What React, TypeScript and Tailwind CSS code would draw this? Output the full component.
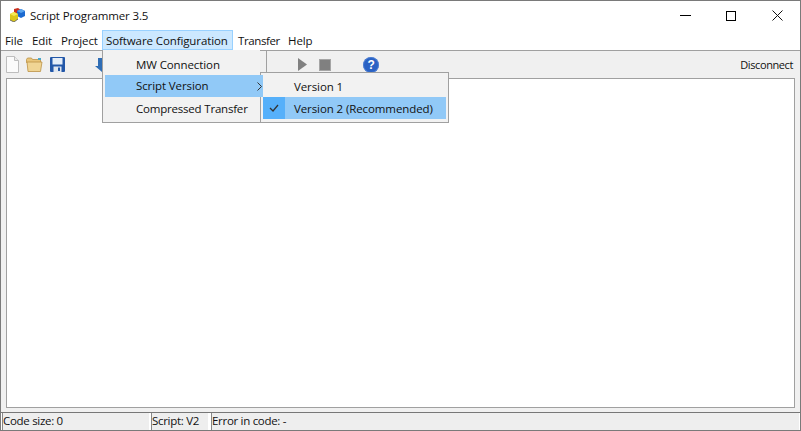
import React from "react";

export default function App() {
  return (
    <div className="relative w-[801px] h-[431px] overflow-hidden bg-[#f0f0f0] border border-[#7a7a7a] flex flex-col text-[11.5px] tracking-[-0.1px] leading-[16px] text-[#111] font-['Open_Sans','Noto_Sans',sans-serif]">
      {/* title */}
      <div className="h-[29px] bg-white flex items-center shrink-0">
        <svg width="16" height="14" viewBox="0 0 16 14" className="ml-[8px] mb-[1px]">
          <path d="M5 1l4-1 3 2v3l-3 2-4-1z" fill="#c9301e" />
          <path d="M8 3l4-2 4 2v5l-4 2-4-2z" fill="#1c6ad0" />
          <path d="M12 1l4 2-4 2-4-2z" fill="#5aa5ee" />
          <path d="M1 6l4-2 4 2v5l-4 3-4-2z" fill="#dcc81a" />
          <path d="M5 4l4 2-4 2-4-2z" fill="#f6ea55" />
          <path d="M1 12l4 2 4-3" fill="none" stroke="#555" strokeWidth="0.8" />
        </svg>
        <span className="ml-[5px] tracking-[-0.13px]">Script Programmer 3.5</span>
        <div className="ml-auto flex items-center">
          <div className="w-[46px] h-[29px] flex items-center justify-center">
            <div className="w-[11px] h-px bg-black" />
          </div>
          <div className="w-[46px] h-[29px] flex items-center justify-center">
            <div className="w-[10px] h-[10px] border border-black" />
          </div>
          <div className="w-[46px] h-[29px] flex items-center justify-center">
            <svg width="11" height="11" viewBox="0 0 11 11"><path d="M.5.5l10 10M10.5.5l-10 10" stroke="#111" strokeWidth="1" /></svg>
          </div>
        </div>
      </div>
      {/* menu */}
      <div className="h-[20px] bg-white flex items-center shrink-0 pl-[4px] leading-[21px]">
        <span className="w-[27px]">File</span>
        <span className="w-[29px]">Edit</span>
        <span className="w-[41px]">Project</span>
        <span className="w-[131px] pl-[3px] h-[20px] leading-[19px] bg-[#cce8ff] border border-[#99d1ff] whitespace-nowrap">Software Configuration</span>
        <span className="ml-[5px] w-[50px] tracking-[-0.4px]">Transfer</span>
        <span>Help</span>
      </div>
      {/* toolbar */}
      <div className="h-[28px] shrink-0 border-t border-[#a0a0a0] bg-[#f0f0f0] flex items-center">
        <svg width="15" height="17" viewBox="0 0 15 17" className="ml-[4px]">
          <path d="M1.5.5h8l4 4v12h-12z" fill="#fbfbfb" stroke="#bdbdbd" />
          <path d="M9.5.5v4h4" fill="#ececec" stroke="#bdbdbd" />
        </svg>
        <svg width="17" height="15" viewBox="0 0 17 15" className="ml-[6px]">
          <path d="M.5 2.5l1-1.5h4l1 1.5h8v3h-14z" fill="#e9c67a" stroke="#bb9245" strokeWidth="0.8" />
          <path d="M12 1h3v2h-3z" fill="#4aa7c8" />
          <path d="M1 5h15l-1.5 9.500h-12.500z" fill="#f0d594" stroke="#bb9245" strokeWidth="0.8" />
        </svg>
        <svg width="15" height="15" viewBox="0 0 15 15" className="ml-[7px]">
          <rect x="0" y="0" width="15" height="15" rx="1" fill="#2257a8" />
          <rect x="2.500" y="1" width="10" height="6.500" fill="#e4edf8" />
          <rect x="3.500" y="9.500" width="8" height="5.500" fill="#dfe6ef" />
          <rect x="8" y="10.500" width="2" height="3.500" fill="#2257a8" />
        </svg>
        <svg width="14" height="14" viewBox="0 0 14 14" className="ml-[30px]">
          <path d="M3 0h8v8h3l-7 6-7-6h3z" fill="#2f6db5" />
        </svg>
        <div className="ml-[157px] w-px h-[27px] bg-[#a0a0a0]" />
        <svg width="9" height="13" viewBox="0 0 9 13" className="ml-[31px]">
          <path d="M0 0l9 6.500-9 6.500z" fill="#808080" />
        </svg>
        <div className="ml-[12px] w-[12px] h-[12px] bg-[#808080] border border-[#a5a5a5]" />
        <svg width="16" height="16" viewBox="0 0 16 16" className="ml-[32px]">
          <circle cx="8" cy="8" r="8" fill="#2a62c4" />
          <circle cx="8" cy="8" r="7.500" fill="none" stroke="#5f8fdc" strokeWidth="0.6" />
          <text x="8" y="12.200" fontSize="12" fontWeight="700" fill="#fff" textAnchor="middle" fontFamily="Liberation Sans">?</text>
        </svg>
        <span className="ml-auto mr-[7px] text-[11px] tracking-[-0.4px]">Disconnect</span>
      </div>
      {/* editor */}
      <div className="h-[330px] shrink-0 mx-[5px] bg-white border border-[#a0a0a0]" />
      {/* status */}
      <div className="h-[18px] shrink-0 mt-[4px] border-t border-[#777] flex pl-px pr-px bg-white">
        <div className="w-[147px] border-l border-[#888] leading-[16px] bg-[#eeeeee] tracking-[-0.3px]">Code size: 0</div>
        <div className="ml-[2px] w-[57px] border-l border-[#888] leading-[16px] bg-[#eeeeee] tracking-[-0.3px]">Script: V2</div>
        <div className="ml-[3px] flex-1 border-l border-[#888] leading-[16px] bg-[#eeeeee] tracking-[-0.3px]">Error in code: -</div>
      </div>

      {/* submenu */}
      <div className="absolute left-[259px] top-[71px] w-[189px] h-[51px] bg-[#f2f2f2] border border-[#a0a0a0] pt-[2px] px-[2px]">
        <div className="h-[22px] leading-[24px] pl-[31px]">Version 1</div>
        <div className="h-[22px] leading-[24px] pl-[31px] bg-[#91c9f7] relative">
          <div className="absolute left-0 top-0 w-[22px] h-[22px] bg-[#56b0fa] flex items-center justify-center">
            <svg width="10" height="8" viewBox="0 0 10 8"><path d="M1 4l3 3 5-6" fill="none" stroke="#333" strokeWidth="1.3" /></svg>
          </div>
          Version 2 (Recommended)
        </div>
      </div>
      {/* menu dropdown */}
      <div className="absolute left-[101px] top-[49px] w-[158px] h-[73px] bg-[#f2f2f2] border-l border-b border-[#a0a0a0] pt-[3px] pl-[2px]">
        <div className="h-[22px] leading-[24px] pl-[31px]">MW Connection</div>
        <div className="h-[22px] w-[158px] leading-[24px] pl-[31px] bg-[#91c9f7] flex items-center">
          <span>Script Version</span>
          <svg width="5" height="9" viewBox="0 0 5 9" className="ml-auto mr-[1px]"><path d="M.5.5l4 4-4 4" fill="none" stroke="#333" /></svg>
        </div>
        <div className="h-[22px] leading-[24px] pl-[31px] tracking-[-0.2px]">Compressed Transfer</div>
      </div>
    </div>
  );
}
